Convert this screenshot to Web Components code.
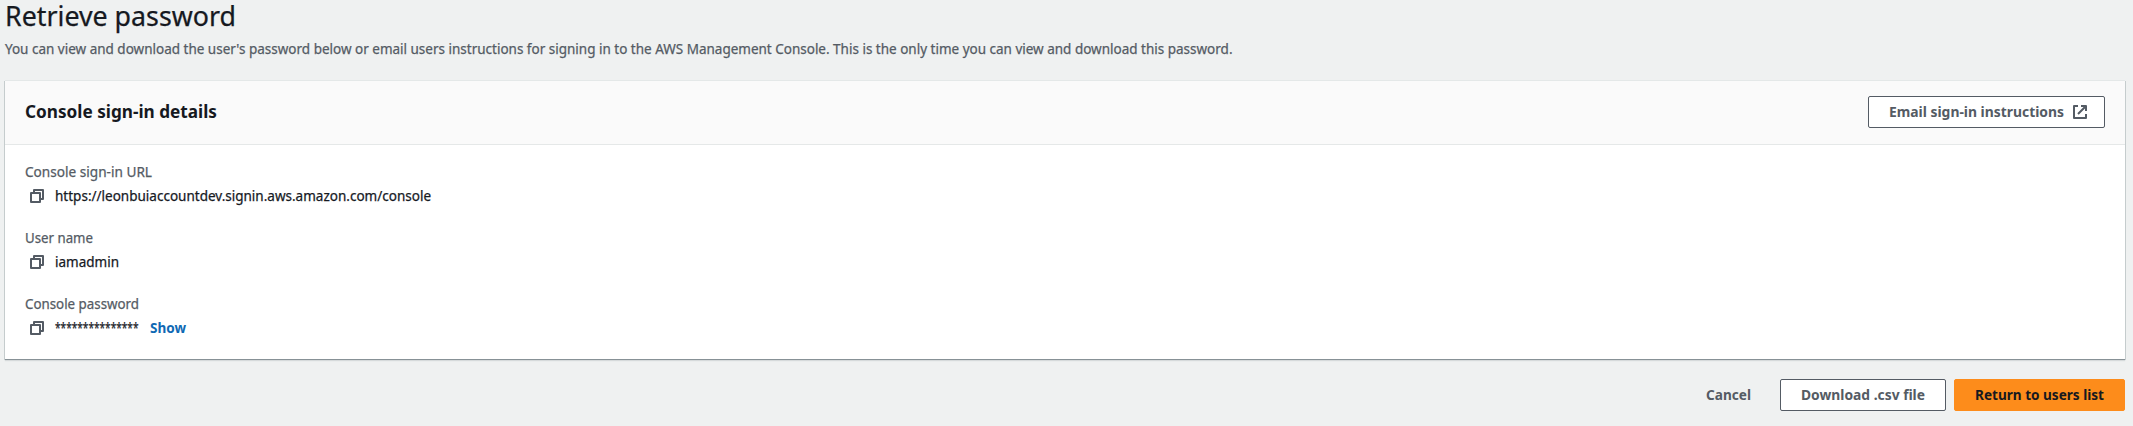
<!DOCTYPE html>
<html lang="en">
<head>
<meta charset="utf-8">
<title>Retrieve password</title>
<style>
html, body { margin: 0; height: 100%; }
body { background: #eff1f1; color: #16191f; font: 14px/22px "Noto Sans", "Open Sans", sans-serif; -webkit-text-stroke: 0.25px; overflow: hidden; }
</style>
</head>
<body>
<password-page></password-page>
<script>
const define = (name, html, ready) => {
  const template = document.createElement('template');
  template.innerHTML = html;
  customElements.define(name, class extends HTMLElement {
    connectedCallback() {
      if (this.shadowRoot) return;
      this.attachShadow({ mode: 'open' }).append(template.content.cloneNode(true));
      if (ready) ready(this, this.shadowRoot);
    }
  });
};

/* A single line of text condensed to the width given in the attribute. */
define('fit-text', `
<style>
:host { display: inline-block; white-space: nowrap; flex: none; }
span { display: inline-block; transform-origin: 0 50%; }
</style><span><slot></slot></span>`, (el, root) => {
  const span = root.querySelector('span');
  const target = Number(el.getAttribute('w'));
  span.style.transform = 'scaleX(' + target / span.getBoundingClientRect().width + ')';
  el.style.width = target + 'px';
});

define('copy-icon', `
<style>:host { display: block; width: 16px; height: 16px; flex: none; } svg { display: block; }</style>
<svg width="16" height="16" viewBox="0 0 16 16" fill="none" stroke="#545b64" stroke-width="2" stroke-linejoin="round">
<path d="M2 5h9v9H2z"/><path d="M5 5V2h9v9h-3"/></svg>`);

define('external-icon', `
<style>:host { display: block; width: 16px; height: 16px; flex: none; } svg { display: block; }</style>
<svg width="16" height="16" viewBox="0 0 16 16" fill="none" stroke="#545b64" stroke-width="2" stroke-linejoin="round">
<path d="M14 10v4H2V2h4"/><path d="M9 2h5v5M6 10l7.5-7.5"/></svg>`);

define('ui-button', `
<style>
:host { display: flex; align-items: center; box-sizing: border-box; height: 32px; padding: 0 20px; border: 1px solid #545b64; border-radius: 2px; background: #fff; color: #545b64; font-weight: 700; -webkit-text-stroke: 0; }
:host([variant=link]) { background: transparent; border-color: transparent; }
:host([variant=primary]) { background: #fd8c1b; border-color: #fd8c1b; color: #16191f; }
slot[name=icon]::slotted(*) { margin: 0 -4px 0 8px; }
</style><slot></slot><slot name="icon"></slot>`);

define('page-heading', `
<style>
:host { display: block; padding: 0 0 20px; }
h1 { margin: 0; height: 38px; font-size: 27px; line-height: 31px; font-weight: 400; }
p { margin: 0; color: #545b64; height: 22px; }
h1 fit-text, p fit-text { vertical-align: top; }
</style>
<h1><fit-text w="231">Retrieve password</fit-text></h1>
<p><fit-text w="1227.5">You can view and download the user's password below or email users instructions for signing in to the AWS Management Console. This is the only time you can view and download this password.</fit-text></p>`);

define('detail-field', `
<style>
:host { display: grid; row-gap: 2px; }
.label { color: #545b64; height: 22px; }
.value { display: flex; align-items: center; height: 22px; padding-left: 4px; }
.text { display: flex; margin-left: 10px; }
.label ::slotted(*) { vertical-align: top; }
</style>
<div class="label"><slot name="label"></slot></div>
<div class="value"><copy-icon></copy-icon><div class="text"><slot></slot></div><slot name="action"></slot></div>`);

define('text-link', `
<style>:host { display: flex; margin-left: 11.5px; color: #0f69b4; font-weight: 700; -webkit-text-stroke: 0; }</style><slot></slot>`);

define('details-card', `
<style>
:host { display: block; box-sizing: border-box; height: 279px; background: #fff; border-top: 1px solid #e4e8e8; box-shadow: 0 1px 0 0 #879196, 1px 1px 0 0 #c5cccd, -1px 1px 0 0 #c5cccd, 0 2px 1px 0 #d6dadb; }
header { box-sizing: border-box; height: 64px; display: flex; align-items: flex-start; justify-content: space-between; padding: 15px 20px 0; background: #fafafa; border-bottom: 1px solid #e5e8e8; }
h2 { margin: 0; font-size: 18px; line-height: 30px; font-weight: 700; display: flex; -webkit-text-stroke: 0; }
section { padding: 16px 20px; display: grid; row-gap: 20px; }
</style>
<header><h2><slot name="title"></slot></h2><slot name="actions"></slot></header>
<section><slot></slot></section>`);

define('action-bar', `
<style>:host { display: flex; justify-content: flex-end; gap: 8px; padding-top: 20px; }</style><slot></slot>`);

define('password-page', `
<style>
:host { display: block; padding: 0 8px 0 5px; }
</style>
<page-heading></page-heading>
<details-card>
  <fit-text slot="title" w="192">Console sign-in details</fit-text>
  <ui-button slot="actions"><fit-text w="175">Email sign-in instructions</fit-text><external-icon slot="icon"></external-icon></ui-button>
  <detail-field><fit-text slot="label" w="127">Console sign-in URL</fit-text><fit-text w="376">https://leonbuiaccountdev.signin.aws.amazon.com/console</fit-text></detail-field>
  <detail-field><fit-text slot="label" w="68">User name</fit-text><fit-text w="64">iamadmin</fit-text></detail-field>
  <detail-field><fit-text slot="label" w="114">Console password</fit-text><fit-text w="83.5">***************</fit-text><text-link slot="action"><fit-text w="36">Show</fit-text></text-link></detail-field>
</details-card>
<action-bar>
  <ui-button variant="link"><fit-text w="45">Cancel</fit-text></ui-button>
  <ui-button><fit-text w="124">Download .csv file</fit-text></ui-button>
  <ui-button variant="primary"><fit-text w="129">Return to users list</fit-text></ui-button>
</action-bar>`);
</script>
</body>
</html>
